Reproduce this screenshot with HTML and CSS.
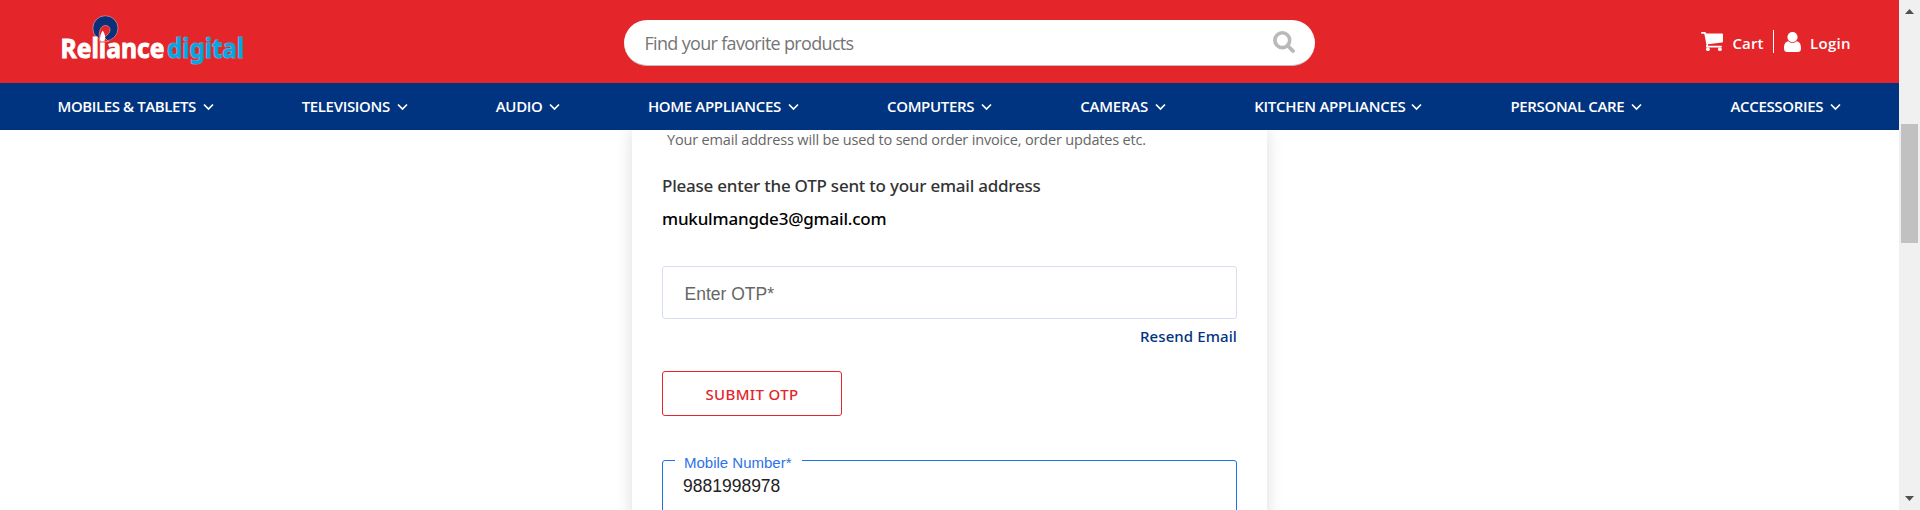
FILE: index.html
```html
<!DOCTYPE html>
<html lang="en">
<head>
<meta charset="utf-8">
<title>Reliance Digital</title>
<link rel="stylesheet" href="styles.css">
</head>
<body>
<div class="page">
  <header class="header">
    <svg class="logo" width="190" height="60" viewBox="58 8 190 60" role="img" aria-label="Reliance digital">
      <circle cx="105.4" cy="28.3" r="12.6" fill="#0b2f78" stroke="#d98d9b" stroke-width=".8"/>
      <path d="M99.600 41.500C99 36 98.400 27 104.500 25.500C110.500 25 111.500 31 108 34L104.500 37.500L108.500 41.500Z" fill="#e42529" stroke="#e0989c" stroke-width=".7"/>
      <text class="logo-main" x="60.500" y="57.500" textLength="104" lengthAdjust="spacingAndGlyphs">Reliance</text>
      <path d="M102.700 30.500C105.500 35 106 38 103.500 41H101.500C99.500 38 100 35 102.700 30.500Z" fill="#fff"/>
      <text class="logo-sub" x="167" y="58" textLength="77" lengthAdjust="spacingAndGlyphs">digital</text>
    </svg>
    <div class="search">
      <span>Find your favorite products</span>
      <svg width="22" height="22" viewBox="0 0 22 22" fill="none" stroke="#b9b9b9"><circle cx="9.300" cy="9.200" r="7.400" stroke-width="3.600"/><path d="M14.500 14.500L20 20" stroke-width="3.800" stroke-linecap="round"/></svg>
    </div>
    <div class="account">
      <svg width="22" height="20" viewBox="0 0 22 20" fill="#fff"><path d="M0 .8Q0 0 .8 0H4Q5 0 5.200 1.500H21Q22 1.500 22 2.500V9.500Q22 10.500 21 10.600L7 12.200V13.800H20.200Q21 13.800 21 14.600T20.200 15.400H5.800Q4.800 15.400 5 14.200L5.400 12.500L3.300 1.800H.8Q0 1.800 0 .8Z"/><circle cx="6.900" cy="17.200" r="1.900"/><circle cx="18.900" cy="17.200" r="1.900"/></svg>
      <span class="cart">Cart</span>
      <span class="divider"></span>
      <svg width="17" height="20" viewBox="0 0 17 20" fill="#fff"><path d="M4.300 9.200C1.500 9.500 0 12 0 16.500Q0 20 3.300 20H13.700Q17 20 17 16.500C17 12 15.500 9.500 12.700 9.200Q11 11 8.500 11T4.300 9.200Z"/><circle cx="8.500" cy="5.100" r="5.100"/></svg>
      <span class="login">Login</span>
    </div>
  </header>
  <nav class="nav">
    <div class="item mobiles"><span>MOBILES &amp; TABLETS</span><svg class="chev" viewBox="0 0 11 8"><path d="M1 1.500L5.500 6L10 1.500"/></svg></div>
    <div class="item televisions"><span>TELEVISIONS</span><svg class="chev" viewBox="0 0 11 8"><path d="M1 1.500L5.500 6L10 1.500"/></svg></div>
    <div class="item audio"><span>AUDIO</span><svg class="chev" viewBox="0 0 11 8"><path d="M1 1.500L5.500 6L10 1.500"/></svg></div>
    <div class="item home"><span>HOME APPLIANCES</span><svg class="chev" viewBox="0 0 11 8"><path d="M1 1.500L5.500 6L10 1.500"/></svg></div>
    <div class="item computers"><span>COMPUTERS</span><svg class="chev" viewBox="0 0 11 8"><path d="M1 1.500L5.500 6L10 1.500"/></svg></div>
    <div class="item cameras"><span>CAMERAS</span><svg class="chev" viewBox="0 0 11 8"><path d="M1 1.500L5.500 6L10 1.500"/></svg></div>
    <div class="item kitchen"><span>KITCHEN APPLIANCES</span><svg class="chev" viewBox="0 0 11 8"><path d="M1 1.500L5.500 6L10 1.500"/></svg></div>
    <div class="item personal"><span>PERSONAL CARE</span><svg class="chev" viewBox="0 0 11 8"><path d="M1 1.500L5.500 6L10 1.500"/></svg></div>
    <div class="item accessories"><span>ACCESSORIES</span><svg class="chev" viewBox="0 0 11 8"><path d="M1 1.500L5.500 6L10 1.500"/></svg></div>
  </nav>
  <main class="main">
    <div class="card">
      <p class="hint">Your email address will be used to send order invoice, order updates etc.</p>
      <p class="lead">Please enter the OTP sent to your email address</p>
      <p class="lead email">mukulmangde3@gmail.com</p>
      <div class="field">Enter OTP*</div>
      <a class="resend">Resend Email</a>
      <button class="submit">SUBMIT OTP</button>
      <div class="field active"><label class="label">Mobile Number*</label>9881998978</div>
    </div>
  </main>
</div>
<aside class="scrollbar">
  <svg width="9" height="5" viewBox="0 0 9 5" fill="#505050"><path d="M0 5L4.500 0L9 5Z"/></svg>
  <div class="thumb"></div>
  <svg class="down" width="9" height="5" viewBox="0 0 9 5" fill="#505050"><path d="M0 0H9L4.500 5Z"/></svg>
</aside>
</body>
</html>
```
FILE: styles.css
```css
* { box-sizing: border-box; }
body { margin: 0; height: 510px; overflow: hidden; display: flex; background: #fff; font-family: "Open Sans", "Noto Sans", sans-serif; }
p { margin: 0; }
svg { flex: none; }

.page { width: 1899px; height: 510px; display: flex; flex-direction: column; overflow: hidden; }

.header { height: 83px; flex: none; display: flex; background: #e42529; }
.logo { margin: 8px 0 0 58px; overflow: visible; }
.logo-main, .logo-sub { font-family: "Noto Sans", sans-serif; font-weight: 700; }
.logo-main { font-size: 27.500px; fill: #fff; stroke: #fff; stroke-width: .9px; }
.logo-sub { font-size: 26.500px; fill: #00a9e6; stroke: #9a98b0; stroke-width: 1.2px; paint-order: stroke; }

.search { width: 691px; height: 46px; margin: 20px 0 0 376px; padding: 0 20px 0 20.500px; border-radius: 23px; background: #fff; border-bottom: 1px solid #c4bcbc; display: flex; align-items: center; justify-content: space-between; font-size: 18px; letter-spacing: -.68px; color: #757575; }
.search svg { margin-top: -1px; }

.account { display: flex; align-items: center; height: 83px; margin-left: 386px; font-size: 15px; font-weight: 600; color: #fff; }
.account .cart { margin: 3px 0 0 9.500px; width: 40.500px; letter-spacing: .1px; }
.account .login { margin: 3px 0 0 9px; letter-spacing: .3px; }
.divider { width: 1px; height: 23px; background: #fff; margin-right: 10px; }

.nav { position: relative; z-index: 1; height: 47px; flex: none; display: flex; align-items: center; justify-content: space-between; padding: 0 58.500px 0 57.500px; background: #003380; color: #fff; font-size: 15px; font-weight: 600; letter-spacing: -.34px; white-space: nowrap; }
.item { display: flex; align-items: center; justify-content: space-between; }
.item span { margin-top: -2px; }
.chev { width: 11px; height: 8px; margin-top: 1px; fill: none; stroke: #fff; stroke-width: 1.700px; }
.mobiles { width: 156px; letter-spacing: -.41px; }
.televisions { width: 106px; }
.audio { width: 64px; }
.home { width: 151px; }
.computers { width: 105px; }
.cameras { width: 86px; letter-spacing: -.2px; }
.kitchen { width: 168px; letter-spacing: -.28px; }
.personal { width: 132px; }
.accessories { width: 110px; }

.main { flex: 1; display: flex; padding-left: 632px; }
.card { width: 635px; height: 460px; padding: 0 30px; display: flex; flex-direction: column; box-shadow: 0 0 16px rgba(0, 0, 0, .14); background: #fff; white-space: nowrap; }
.hint { margin: 0 0 20px 5px; line-height: 19px; font-size: 14.500px; letter-spacing: -.17px; color: #666; }
.lead { line-height: 33px; font-family: "Noto Sans", sans-serif; font-size: 17px; font-weight: 500; letter-spacing: -.23px; color: #333; }
.email { color: #000; letter-spacing: -.2px; }
.field { position: relative; height: 53px; margin-top: 31px; padding-left: 21.500px; border: 1px solid #d5dfed; border-radius: 3px; line-height: 54px; font-family: "Liberation Sans", Arial, sans-serif; font-size: 17.500px; color: #666; }
.resend { align-self: flex-end; margin-top: 6px; line-height: 22px; font-family: "Noto Sans", sans-serif; font-size: 15px; font-weight: 500; letter-spacing: .1px; color: #003380; }
.submit { width: 180px; height: 45px; margin-top: 24px; padding: 1px 0 0; border: 1px solid #e42529; border-radius: 3px; background: #fff; font-family: "Noto Sans", sans-serif; font-size: 15px; font-weight: 500; letter-spacing: .37px; color: #e42529; }
.active { margin-top: 44px; height: 60px; padding-left: 20px; border-color: #1a73e8; line-height: 50px; color: #222; }
.label { position: absolute; left: 12px; top: -8px; width: 127px; padding-left: 9px; background: #fff; line-height: 19px; font-size: 15px; color: #2d72e8; }

.scrollbar { width: 21px; height: 510px; background: #f0f0f0; display: flex; flex-direction: column; align-items: center; padding: 9px 0; }
.thumb { width: 17px; height: 119px; margin-top: 110px; background: #c1c1c1; }
.down { margin-top: auto; }
```
